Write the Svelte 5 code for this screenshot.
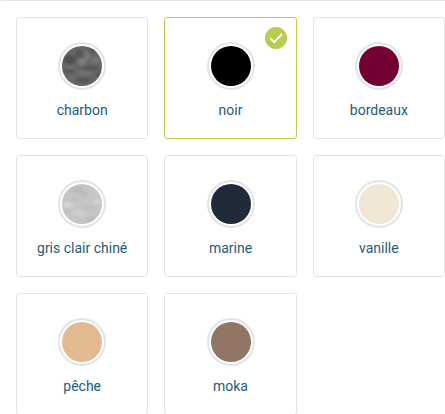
<script>
  const colors = [
    { name: 'charbon', fill: '#676566', texture: 'dark' },
    { name: 'noir', fill: '#000000' },
    { name: 'bordeaux', fill: '#730033' },
    { name: 'gris clair chiné', fill: '#c5c5c5', texture: 'light' },
    { name: 'marine', fill: '#212a39' },
    { name: 'vanille', fill: '#f0e8d5' },
    { name: 'pêche', fill: '#e3bb93' },
    { name: 'moka', fill: '#937565' },
  ];

  // cx, cy, rx, ry, colour of each soft patch in the heather fabrics
  const patches = {
    dark: [
      [8, 14, 6, 5, '#505050'], [17, 8, 4, 4, '#575657'], [25, 10, 2, 5, '#817f80'],
      [34, 14, 5, 3, '#787677'], [20, 16, 4, 4, '#7d7b7c'], [9, 21, 5, 2, '#727071'],
      [28, 22, 10, 1.5, '#4d4b4c'], [7, 25, 6, 2, '#525051'], [22, 27, 8, 2, '#757374'],
      [21, 34, 8, 2, '#535152'], [10, 31, 4, 2, '#706e6f'], [37, 28, 3, 3, '#575556'],
      [30, 4, 5, 3, '#5a5859'],
    ],
    light: [
      [16, 6, 6, 3, '#b9b9b9'], [22, 10, 4, 2, '#bababa'], [5, 21, 7, 3, '#d6d6d6'],
      [36, 18, 5, 2, '#d6d6d6'], [18, 29, 7, 3, '#d0d0d0'], [27, 24, 6, 3, '#bfbfbf'],
      [13, 16, 6, 2, '#c0c0c0'], [28, 35, 5, 3, '#bdbdbd'], [34, 10, 4, 3, '#cacaca'],
      [5, 28, 4, 2, '#c0c0c0'],
    ],
  };

  let selected = $state('noir');
</script>

<div class="picker">
  <div class="panel-edge"></div>
  <div class="grid">
    {#each colors as color (color.name)}
      <button class="card" class:selected={selected === color.name} onclick={() => (selected = color.name)}>
        <span class="ring">
          <span class="swatch" style="background: {color.fill}">
            {#if color.texture}
              <svg viewBox="0 0 40 40" width="40" height="40">
                <defs>
                  <filter id="soft-{color.texture}"><feGaussianBlur stdDeviation="1.7" /></filter>
                </defs>
                <g filter="url(#soft-{color.texture})">
                  {#each patches[color.texture] as [cx, cy, rx, ry, tone]}
                    <ellipse {cx} {cy} {rx} {ry} fill={tone} />
                  {/each}
                </g>
              </svg>
            {/if}
          </span>
        </span>
        <span class="label">{color.name}</span>
        {#if selected === color.name}
          <svg class="check" viewBox="0 0 22 22" width="22" height="22">
            <circle cx="11" cy="11" r="11" fill="#b9cd4c" />
            <path d="M5.2 11.2 9.1 15.1 17 7" fill="none" stroke="#fff" stroke-width="1.9" />
          </svg>
        {/if}
      </button>
    {/each}
  </div>
</div>

<style>
  :global(body) {
    background: #fff;
    overflow: hidden;
  }
  .picker {
    height: 414px;
    overflow: hidden;
    font-family: Roboto, sans-serif;
  }
  .panel-edge {
    height: 1px;
    margin-left: 1px;
    background: #e0e6e8;
  }
  .grid {
    display: grid;
    grid-template-columns: repeat(3, 1fr);
    gap: 16px;
    padding: 16px 0 0 16px;
  }
  .card {
    position: relative;
    box-sizing: border-box;
    height: 122px;
    min-width: 0;
    margin: 0;
    padding: 24px 0 16px;
    display: flex;
    flex-direction: column;
    align-items: center;
    gap: 8px;
    border: 1px solid #e0e6e8;
    border-radius: 3px;
    background: #fff;
    font: inherit;
    cursor: pointer;
  }
  .card.selected {
    border-color: #b9cd4c;
  }
  .ring {
    box-sizing: border-box;
    width: 48px;
    height: 48px;
    margin-left: 0.25px;
    padding: 2px;
    border: 2px solid #e0e6e8;
    border-radius: 50%;
  }
  .swatch {
    display: block;
    width: 40px;
    height: 40px;
    border-radius: 50%;
    overflow: hidden;
  }
  .swatch svg {
    display: block;
  }
  .label {
    font-size: 14px;
    line-height: 24px;
    color: #275a78;
    white-space: nowrap;
  }
  .check {
    position: absolute;
    top: 9px;
    right: 9px;
  }
</style>
